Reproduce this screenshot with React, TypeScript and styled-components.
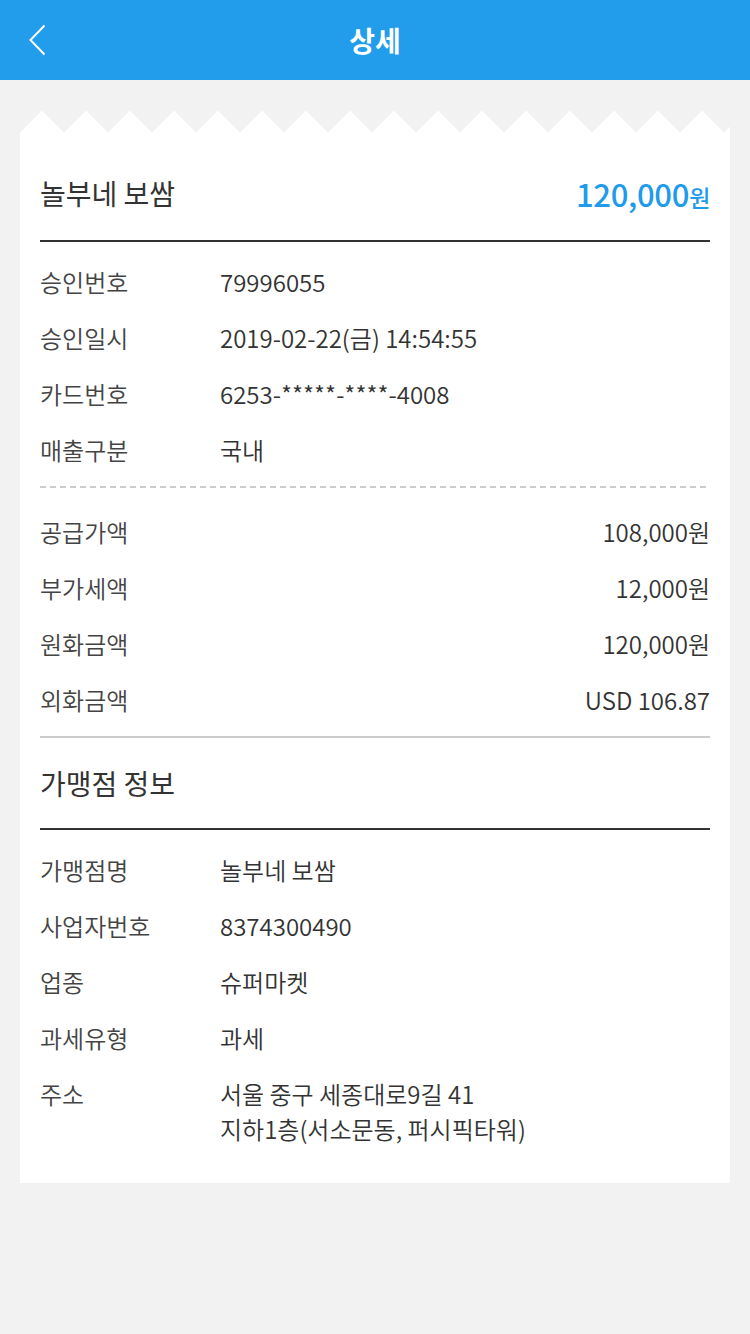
import React from "react";
import styled, { createGlobalStyle } from "styled-components";

const GlobalStyle = createGlobalStyle`
  html, body {
    margin: 0;
    padding: 0;
    background: #f2f2f2;
    font-family: "Noto Sans CJK KR", "Noto Sans", sans-serif;
    color: #333;
  }
`;

type Item = { label: string; value: React.ReactNode };

const approval: Item[] = [
  { label: "승인번호", value: "79996055" },
  { label: "승인일시", value: "2019-02-22(금) 14:54:55" },
  { label: "카드번호", value: "6253-*****-****-4008" },
  { label: "매출구분", value: "국내" },
];

const amounts: Item[] = [
  { label: "공급가액", value: "108,000원" },
  { label: "부가세액", value: "12,000원" },
  { label: "원화금액", value: "120,000원" },
  { label: "외화금액", value: "USD 106.87" },
];

const merchant: Item[] = [
  { label: "가맹점명", value: "놀부네 보쌈" },
  { label: "사업자번호", value: "8374300490" },
  { label: "업종", value: "슈퍼마켓" },
  { label: "과세유형", value: "과세" },
  {
    label: "주소",
    value: (
      <>
        서울 중구 세종대로9길 41
        <br />
        지하1층(서소문동, 퍼시픽타워)
      </>
    ),
  },
];

const App: React.FC = () => {
  return (
    <>
      <GlobalStyle />
      <Page>
        <Header>
          <BackButton aria-label="뒤로">
            <svg width="20" height="34" viewBox="0 0 20 34">
              <polyline
                points="15.5,1.5 1.5,16 15.5,30.5"
                fill="none"
                stroke="#fff"
                strokeWidth="2"
              />
            </svg>
          </BackButton>
          <HeaderTitle>상세</HeaderTitle>
          <span />
        </Header>

        <Receipt>
          <ZigZag />
          <ReceiptBody>
            <TitleRow>
              <StoreName>놀부네 보쌈</StoreName>
              <Total>
                120,000<small>원</small>
              </Total>
            </TitleRow>

            <Section $top={11} $bottom={9}>
              {approval.map((it) => (
                <Row key={it.label}>
                  <Label>{it.label}</Label>
                  <Value>{it.value}</Value>
                </Row>
              ))}
            </Section>
            <Divider $dashed />
            <Section $top={15} $bottom={9}>
              {amounts.map((it) => (
                <Row key={it.label}>
                  <Label>{it.label}</Label>
                  <Value $right>{it.value}</Value>
                </Row>
              ))}
            </Section>
            <Divider />

            <SectionTitle>가맹점 정보</SectionTitle>
            <Section $top={11} $bottom={7}>
              {merchant.map((it) => (
                <Row key={it.label}>
                  <Label>{it.label}</Label>
                  <Value>{it.value}</Value>
                </Row>
              ))}
            </Section>
          </ReceiptBody>
        </Receipt>
      </Page>
    </>
  );
};

const Page = styled.div`
  min-height: 1334px;
  background: #f2f2f2;
`;

const Header = styled.header`
  height: 80px;
  background: #219dec;
  display: grid;
  grid-template-columns: 80px 1fr 80px;
  align-items: center;
`;

const BackButton = styled.button`
  border: none;
  background: transparent;
  padding: 0 0 0 29px;
  height: 80px;
  display: flex;
  align-items: center;
  cursor: pointer;
`;

const HeaderTitle = styled.h1`
  margin: 0;
  text-align: center;
  color: #fff;
  font-size: 28px;
  font-weight: 700;
  line-height: 80px;
  padding-bottom: 2px;
`;

const Receipt = styled.div`
  margin: 30px 20px 0;
`;

const ZigZag = styled.div`
  height: 22px;
  background-image: conic-gradient(from -45deg at 50% 100%, transparent 90deg, #fff 0);
  background-size: 44px 22px;
  background-repeat: repeat-x;
  background-position: -22px 0;
`;

const ReceiptBody = styled.div`
  background: #fff;
  padding: 0 20px 20px;
`;

const TitleRow = styled.div`
  height: 110px;
  box-sizing: border-box;
  padding-top: 14px;
  display: flex;
  align-items: center;
  justify-content: space-between;
  border-bottom: 2px solid #333;
`;

const StoreName = styled.h2`
  margin: 0;
  font-size: 28px;
  font-weight: 400;
  color: #333;
`;

const Total = styled.div`
  color: #1e9beb;
  font-size: 31px;
  font-weight: 500;
  letter-spacing: -0.3px;

  small {
    font-size: 23px;
  }
`;

const Section = styled.div<{ $top: number; $bottom: number }>`
  padding: ${(p) => p.$top}px 0 ${(p) => p.$bottom}px;
`;

const Row = styled.div`
  display: flex;
  padding: 10.5px 0;
  line-height: 35px;
  font-size: 24px;
  font-weight: 350;
`;

const Label = styled.div`
  width: 180px;
  flex-shrink: 0;
  color: #444;
`;

const Value = styled.div<{ $right?: boolean }>`
  flex: 1;
  color: #333;
  text-align: ${(p) => (p.$right ? "right" : "left")};
`;

const Divider = styled.div<{ $dashed?: boolean }>`
  height: 2px;
  background: ${(p) =>
    p.$dashed
      ? "repeating-linear-gradient(to right, #ccc 0 6px, transparent 6px 10px)"
      : "#ccc"};
`;

const SectionTitle = styled.h2`
  margin: 0;
  height: 92px;
  box-sizing: border-box;
  display: flex;
  align-items: center;
  font-size: 28px;
  font-weight: 400;
  color: #333;
  border-bottom: 2px solid #333;
`;

export default App;
